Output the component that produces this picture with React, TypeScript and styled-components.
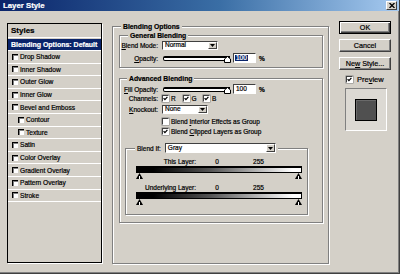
import styled, { createGlobalStyle } from 'styled-components'

const FACE = '"Liberation Sans", Arial, sans-serif'

const GlobalStyle = createGlobalStyle`
  html, body {
    margin: 0;
    padding: 0;
    background: #d4d0c8;
  }
  body {
    font-family: ${FACE};
    font-size: 6.5px;
    color: #000;
    -webkit-text-stroke: 0.2px currentColor;
  }
`

const Window = styled.div`
  box-sizing: border-box;
  width: 400px;
  height: 274px;
  display: flex;
  flex-direction: column;
  background: #d4d0c8;
  border-right: 1px solid #404040;
  border-bottom: 1px solid #404040;
  box-shadow: inset -1px -1px 0 #808080;
  overflow: hidden;
`

const TitleBar = styled.div`
  flex: none;
  display: flex;
  align-items: center;
  height: 11px;
  padding: 0 2px 0 3px;
  background: linear-gradient(to right, #0a246a 0%, #3a6ea5 55%, #a6caf0 100%);
`

const Title = styled.span`
  font-weight: bold;
  font-size: 7.8px;
  line-height: 11px;
  color: #fff;
`

const CloseButton = styled.div`
  margin-left: auto;
  box-sizing: border-box;
  width: 11px;
  height: 9px;
  display: flex;
  align-items: center;
  justify-content: center;
  background: #d4d0c8;
  border: 1px solid;
  border-color: #fff #404040 #404040 #fff;
`

const Body = styled.div`
  flex: 1;
  display: flex;
  align-items: flex-start;
  padding-left: 7px;
`

/* left: list of styles */

const StylesList = styled.div`
  flex: none;
  box-sizing: border-box;
  width: 95px;
  height: 240px;
  margin-top: 12px;
  border: 1px solid #000;
  box-shadow: 1px 1px 0 #fff;
  display: flex;
  flex-direction: column;
`

const ListHeader = styled.div`
  height: 13px;
  line-height: 13px;
  padding-left: 3px;
  font-weight: bold;
  font-size: 8px;
  border-bottom: 1px solid #fff;
`

const ListRow = styled.div<{ $selected?: boolean; $indent?: boolean }>`
  box-sizing: border-box;
  flex: none;
  height: ${p => (p.$selected ? '12px' : '12.6px')};
  margin-top: ${p => (p.$selected ? '1px' : '0')};
  display: flex;
  align-items: center;
  padding-left: ${p => (p.$selected ? 3 : p.$indent ? 10 : 4)}px;
  border-bottom: 1px solid #fff;
  background: ${p => (p.$selected ? '#0a246a' : 'transparent')};
  color: ${p => (p.$selected ? '#fff' : '#000')};
  font-weight: ${p => (p.$selected ? 'bold' : 'normal')};
  font-size: ${p => (p.$selected ? '7px' : '6.6px')};
  white-space: nowrap;
`

const ListCheck = styled.span`
  flex: none;
  box-sizing: border-box;
  width: 6px;
  height: 6px;
  margin-right: 2px;
  background: #fff;
  border-top: 1px solid #000;
  border-left: 1px solid #000;
  box-shadow: inset 1px 1px 0 #808080;
`

/* middle: group boxes */

const GroupBox = styled.div<{ $h: number; $w?: number; $mt?: number; $ml?: number; $pt?: number }>`
  position: relative;
  flex: none;
  box-sizing: border-box;
  width: ${p => (p.$w ? `${p.$w}px` : 'auto')};
  height: ${p => p.$h}px;
  margin-top: ${p => p.$mt ?? 0}px;
  margin-left: ${p => p.$ml ?? 0}px;
  padding-top: ${p => p.$pt ?? 0}px;
  border: 1px solid #808080;
  box-shadow: inset 1px 1px 0 #fff, 1px 1px 0 #fff;
  display: flex;
  flex-direction: column;
`

const Legend = styled.div<{ $left: number; $top?: number }>`
  position: absolute;
  top: ${p => p.$top ?? -5}px;
  left: ${p => p.$left}px;
  display: flex;
  align-items: center;
  gap: 4px;
  padding: 0 2px;
  background: #d4d0c8;
  font-weight: bold;
  font-size: 6.8px;
  line-height: 9px;
  white-space: nowrap;
`

const LegendLabel = styled.span`
  font-weight: normal;
  font-size: 6.5px;
`

const OptionsBody = styled.div`
  display: flex;
  flex-direction: column;
  padding: 0 5px 0 6px;
`

const FieldRow = styled.div<{ $h: number; $mt?: number }>`
  display: grid;
  grid-template-columns: 38px 1fr;
  column-gap: 4px;
  align-items: center;
  height: ${p => p.$h}px;
  margin-top: ${p => p.$mt ?? 0}px;
`

const FieldLabel = styled.span`
  text-align: right;
  white-space: nowrap;
`

const Controls = styled.div<{ $gap?: number }>`
  display: flex;
  align-items: center;
  gap: ${p => p.$gap ?? 2}px;
  white-space: nowrap;
`

const Select = styled.div<{ $w: number; $h: number }>`
  box-sizing: border-box;
  width: ${p => p.$w}px;
  height: ${p => p.$h}px;
  display: flex;
  align-items: center;
  background: #fff;
  border: 1px solid;
  border-color: #404040 #fff #fff #404040;
  font-weight: normal;
  font-size: 6.5px;
  line-height: 1;
`

const SelectText = styled.span`
  flex: 1;
  padding-left: 2px;
`

const DropButton = styled.span`
  box-sizing: border-box;
  width: 9px;
  height: 100%;
  display: flex;
  align-items: center;
  justify-content: center;
  background: #d4d0c8;
  border: 1px solid;
  border-color: #fff #404040 #404040 #fff;
`

const Slider = styled.div`
  position: relative;
  box-sizing: border-box;
  width: 67px;
  height: 5px;
  margin-left: 1px;
  background: #fff;
  border: 1px solid #000;
  border-top-width: 2px;
  border-radius: 2px 0 0 2px;
`

const SliderThumb = styled.svg`
  position: absolute;
  right: -2px;
  top: -2px;
`

const NumberBox = styled.div`
  box-sizing: border-box;
  width: 23px;
  height: 10px;
  margin-left: 1px;
  display: flex;
  align-items: center;
  padding-left: 1px;
  background: #fff;
  border: 1px solid;
  border-color: #404040 #fff #fff #404040;
  line-height: 1;
`

const Highlight = styled.span<{ $on?: boolean }>`
  padding: 0 1px;
  background: ${p => (p.$on ? '#0a246a' : 'transparent')};
  color: ${p => (p.$on ? '#fff' : '#000')};
`

const Percent = styled.span`
  margin-left: 1px;
  font-weight: bold;
`

const CheckBox = styled.span`
  flex: none;
  box-sizing: border-box;
  width: 7px;
  height: 7px;
  display: flex;
  background: #fff;
  border: 1px solid;
  border-color: #404040 #fff #fff #404040;
  box-shadow: 0 0 0 0.5px #808080;
`

const ChannelItem = styled.span`
  width: 20.5px;
  display: flex;
  align-items: center;
  gap: 2px;
`

const ScaleRow = styled.div<{ $mt: number }>`
  display: grid;
  grid-template-columns: 70px 42px 41px;
  height: 8px;
  line-height: 8px;
  margin-top: ${p => p.$mt}px;
  & > span {
    text-align: center;
  }
  & > span:first-child {
    text-align: right;
  }
`

const GradientBar = styled.div`
  box-sizing: border-box;
  width: 166px;
  height: 7px;
  margin-left: 10px;
  border: 1px solid #000;
  border-top-width: 2px;
  background: linear-gradient(to right, #000 10%, #555 45%, #fff 95%);
`

const ThumbRow = styled.div`
  width: 166px;
  height: 6px;
  margin-left: 10px;
  display: flex;
  justify-content: space-between;
`

/* right column */

const SideColumn = styled.div`
  flex: none;
  width: 52px;
  margin: 10px 0 0 10px;
  display: flex;
  flex-direction: column;
`

const Button = styled.div<{ $default?: boolean; $mt?: number }>`
  box-sizing: border-box;
  height: 13px;
  margin-top: ${p => p.$mt ?? 0}px;
  display: flex;
  align-items: center;
  justify-content: center;
  font-size: 7.2px;
  background: #d4d0c8;
  border: 1px solid;
  border-color: ${p => (p.$default ? '#000' : '#fff #404040 #404040 #fff')};
  box-shadow: ${p =>
    p.$default
      ? 'inset 1px 1px 0 #fff, inset -1px -1px 0 #404040, inset -2px -2px 0 #808080'
      : 'inset -1px -1px 0 #808080'};
`

const PreviewRow = styled.label`
  height: 7px;
  margin: 6px 0 0 7px;
  display: flex;
  align-items: center;
  gap: 4px;
  font-size: 7.5px;
`

const Swatch = styled.div`
  box-sizing: border-box;
  width: 42px;
  height: 43px;
  margin: 5px 0 0 6px;
  display: flex;
  align-items: center;
  justify-content: center;
  background: #dcd9d3;
  border: 1px solid;
  border-color: #808080 #fff #fff #808080;
`

const SwatchInner = styled.div`
  box-sizing: border-box;
  width: 22px;
  height: 22px;
  background: #505050;
  border: 1px solid #000;
  box-shadow: inset 1px 1px 0 #6a6a6a;
`

const Key = styled.span`
  text-decoration: underline;
  text-underline-offset: 1px;
`

const effects: { name: string; indent?: boolean }[] = [
  { name: 'Drop Shadow' },
  { name: 'Inner Shadow' },
  { name: 'Outer Glow' },
  { name: 'Inner Glow' },
  { name: 'Bevel and Emboss' },
  { name: 'Contour', indent: true },
  { name: 'Texture', indent: true },
  { name: 'Satin' },
  { name: 'Color Overlay' },
  { name: 'Gradient Overlay' },
  { name: 'Pattern Overlay' },
  { name: 'Stroke' },
]

const Arrow = () => (
  <svg width="5" height="3" viewBox="0 0 5 3">
    <path d="M0 0H5L2.5 3Z" fill="#000" />
  </svg>
)

const Check = ({ checked }: { checked?: boolean }) => (
  <CheckBox>
    {checked && (
      <svg width="5" height="5" viewBox="0 0 5 5">
        <path d="M0.6 2.2L1.9 3.6L4.4 0.8" stroke="#000" strokeWidth="1.2" fill="none" />
      </svg>
    )}
  </CheckBox>
)

const Thumb = () => (
  <svg width="7" height="6" viewBox="0 0 7 6">
    <path d="M3.5 0L7 6H0Z" fill="#000" />
    <rect x="3" y="3" width="1" height="3" fill="#fff" />
  </svg>
)

const OpacitySlider = () => (
  <Slider>
    <SliderThumb width="7" height="7" viewBox="0 0 7 7">
      <path d="M0.5 3L3.5 0.5L6.5 3V6.5H0.5Z" fill="#fff" stroke="#000" />
    </SliderThumb>
  </Slider>
)

const DropDown = ({ value, w, h }: { value: string; w: number; h: number }) => (
  <Select $w={w} $h={h}>
    <SelectText>{value}</SelectText>
    <DropButton>
      <Arrow />
    </DropButton>
  </Select>
)

const BlendScale = ({ label, mt }: { label: string; mt: number }) => (
  <>
    <ScaleRow $mt={mt}>
      <span>{label}</span>
      <span>0</span>
      <span>255</span>
    </ScaleRow>
    <GradientBar />
    <ThumbRow>
      <Thumb />
      <Thumb />
    </ThumbRow>
  </>
)

export default function App() {
  return (
    <>
      <GlobalStyle />
      <Window>
        <TitleBar>
          <Title>Layer Style</Title>
          <CloseButton>
            <svg width="6" height="5" viewBox="0 0 6 5">
              <path d="M0.5 0L5.5 5M5.5 0L0.5 5" stroke="#000" strokeWidth="1.3" />
            </svg>
          </CloseButton>
        </TitleBar>

        <Body>
          <StylesList>
            <ListHeader>Styles</ListHeader>
            <ListRow $selected>Blending Options: Default</ListRow>
            {effects.map(effect => (
              <ListRow key={effect.name} $indent={effect.indent}>
                <ListCheck />
                {effect.name}
              </ListRow>
            ))}
          </StylesList>

          <GroupBox $w={217} $h={238} $mt={15} $ml={10} $pt={8}>
            <Legend $left={8}>Blending Options</Legend>
            <OptionsBody>
              <GroupBox $h={33} $pt={5}>
                <Legend $left={8}>General Blending</Legend>
                <FieldRow $h={9}>
                  <FieldLabel>
                    <Key>B</Key>lend Mode:
                  </FieldLabel>
                  <DropDown value="Normal" w={56} h={9} />
                </FieldRow>
                <FieldRow $h={10} $mt={3}>
                  <FieldLabel>
                    <Key>O</Key>pacity:
                  </FieldLabel>
                  <Controls>
                    <OpacitySlider />
                    <NumberBox>
                      <Highlight $on>100</Highlight>
                    </NumberBox>
                    <Percent>%</Percent>
                  </Controls>
                </FieldRow>
              </GroupBox>

              <GroupBox $h={145} $mt={10} $pt={5}>
                <Legend $left={7}>Advanced Blending</Legend>
                <FieldRow $h={10}>
                  <FieldLabel>
                    <Key>F</Key>ill Opacity:
                  </FieldLabel>
                  <Controls>
                    <OpacitySlider />
                    <NumberBox>
                      <Highlight>100</Highlight>
                    </NumberBox>
                    <Percent>%</Percent>
                  </Controls>
                </FieldRow>
                <FieldRow $h={7} $mt={1}>
                  <FieldLabel>Channels:</FieldLabel>
                  <Controls $gap={0}>
                    <ChannelItem>
                      <Check checked />R
                    </ChannelItem>
                    <ChannelItem>
                      <Check checked />G
                    </ChannelItem>
                    <ChannelItem>
                      <Check checked />B
                    </ChannelItem>
                  </Controls>
                </FieldRow>
                <FieldRow $h={9} $mt={3}>
                  <FieldLabel>
                    <Key>K</Key>nockout:
                  </FieldLabel>
                  <DropDown value="None" w={46} h={9} />
                </FieldRow>
                <FieldRow $h={7} $mt={4}>
                  <span />
                  <Controls>
                    <Check />
                    <span>
                      Blend <Key>I</Key>nterior Effects as Group
                    </span>
                  </Controls>
                </FieldRow>
                <FieldRow $h={7} $mt={3}>
                  <span />
                  <Controls>
                    <Check checked />
                    <span>
                      Blend <Key>C</Key>lipped Layers as Group
                    </span>
                  </Controls>
                </FieldRow>

                <GroupBox $w={183} $h={67} $mt={13} $ml={5}>
                  <Legend $left={9} $top={-6}>
                    <LegendLabel>Blend If:</LegendLabel>
                    <DropDown value="Gray" w={111} h={10} />
                  </Legend>
                  <BlendScale label="This Layer:" mt={9} />
                  <BlendScale label="Underlying Layer:" mt={5} />
                </GroupBox>
              </GroupBox>
            </OptionsBody>
          </GroupBox>

          <SideColumn>
            <Button $default>OK</Button>
            <Button $mt={5}>Cancel</Button>
            <Button $mt={5}>
              <span>
                Ne<Key>w</Key> Style...
              </span>
            </Button>
            <PreviewRow>
              <Check checked />
              <span>
                Pre<Key>v</Key>iew
              </span>
            </PreviewRow>
            <Swatch>
              <SwatchInner />
            </Swatch>
          </SideColumn>
        </Body>
      </Window>
    </>
  )
}
